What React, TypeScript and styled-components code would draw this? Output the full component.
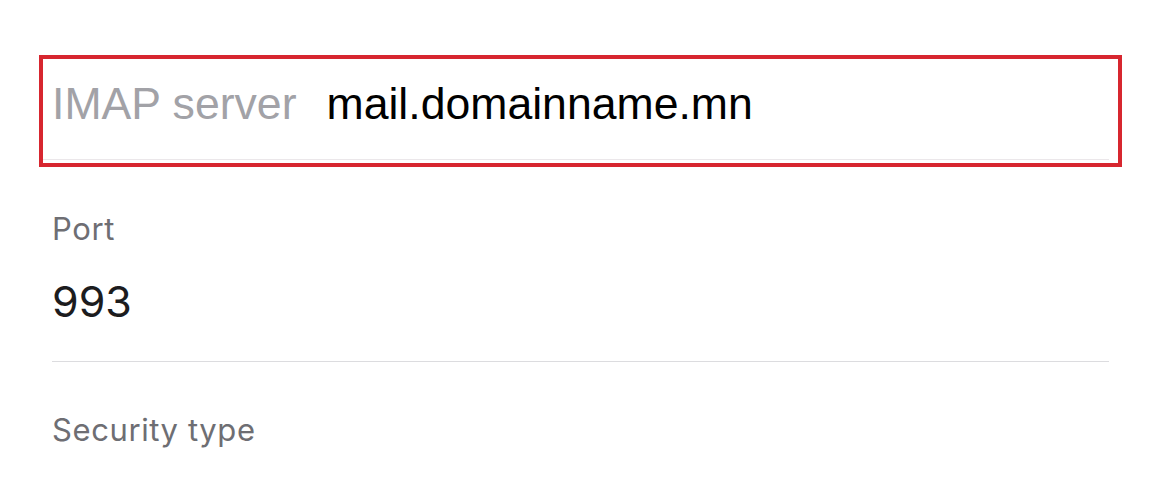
import * as React from 'react';
import styled, { createGlobalStyle } from 'styled-components';

const GlobalStyle = createGlobalStyle`
  html, body {
    margin: 0;
    padding: 0;
    background: #ffffff;
  }
  body {
    font-family: "Inter", "Liberation Sans", sans-serif;
    -webkit-font-smoothing: antialiased;
  }
`;

const Page = styled.div`
  width: 1160px;
  height: 490px;
  overflow: hidden;
  padding-top: 55px;
  box-sizing: border-box;
`;

const Highlight = styled.div`
  margin-left: 39px;
  width: 1083px;
  height: 112px;
  box-sizing: border-box;
  border: 4px solid #d7262f;
  padding: 22px 9px 3px 0;
  display: flex;
  flex-direction: column;
`;

const InlineRow = styled.div`
  display: flex;
  align-items: baseline;
  gap: 30px;
  padding-left: 9px;
  height: 45px;
  font-family: "Liberation Sans", Arial, sans-serif;
  font-size: 44.6px;
  line-height: 45px;
  flex: 1;
`;

const InlineLabel = styled.span`
  color: #a2a2a7;
`;

const InlineValue = styled.span`
  color: #000000;
`;

const Divider = styled.div<{ $color?: string }>`
  height: 1px;
  flex: none;
  background: ${p => p.$color || '#dcdcdf'};
`;

const Section = styled.div`
  padding-left: 52px;
  width: 1109px;
  box-sizing: border-box;
`;

const FieldLabel = styled.div<{ $top: number }>`
  margin-top: ${p => p.$top}px;
  font-size: 31px;
  line-height: 1;
  height: 31px;
  color: #6e6e73;
  letter-spacing: 0.6px;
`;

const FieldValue = styled.div`
  margin-top: 36px;
  margin-bottom: 39px;
  font-size: 43px;
  line-height: 1;
  height: 42px;
  color: #1c1c1e;
`;

const App = () => {
  return (
    <Page>
      <GlobalStyle />
      <Highlight>
        <InlineRow>
          <InlineLabel>IMAP server</InlineLabel>
          <InlineValue>mail.domainname.mn</InlineValue>
        </InlineRow>
        <Divider $color="#ebe7ea" />
      </Highlight>
      <Section>
        <FieldLabel $top={46}>Port</FieldLabel>
        <FieldValue>993</FieldValue>
        <Divider />
        <FieldLabel $top={52}>Security type</FieldLabel>
      </Section>
    </Page>
  );
};

export default App;
